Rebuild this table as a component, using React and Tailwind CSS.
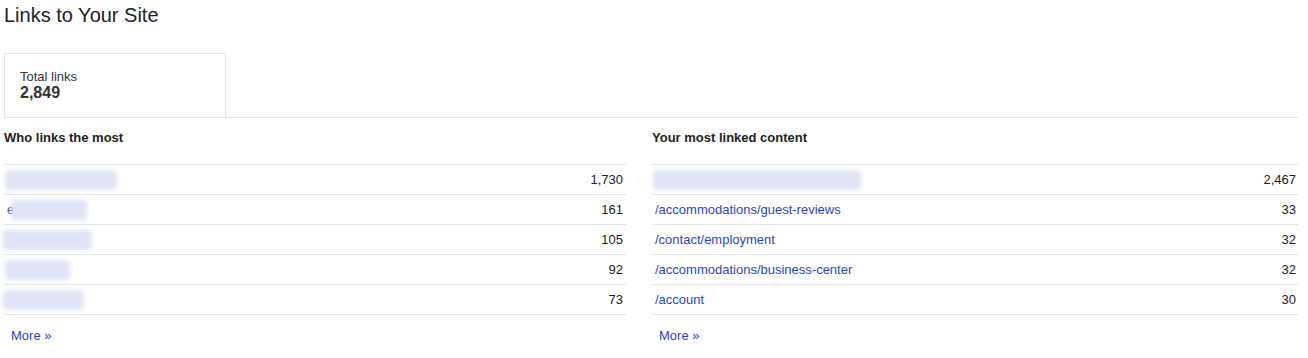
import React from "react";

const whoLinks = [
  { blur: "ml-[1px] w-[112px]", count: "1,730" },
  { blur: "w-[76px]", count: "161", glyph: true },
  { blur: "w-[89px] -ml-[1px]", count: "105" },
  { blur: "ml-[1px] w-[65px]", count: "92" },
  { blur: "w-[81px] -ml-[1px]", count: "73" },
];

const content = [
  { path: null, count: "2,467" },
  { path: "/accommodations/guest-reviews", count: "33" },
  { path: "/contact/employment", count: "32" },
  { path: "/accommodations/business-center", count: "32" },
  { path: "/account", count: "30" },
];

const Blur = ({ className }) => (
  <span className={`block h-[20px] rounded-sm bg-[#e0e4f5] blur-[2px] ${className}`} />
);

const App = () => {
  return (
    <div className="w-[1308px] h-[358px] bg-white pl-[4px] pr-[10px] font-['Liberation_Sans',Arial,sans-serif] text-[#222]">
      <h1 className="text-[20px] leading-[24px] pt-[3px] font-normal">Links to Your Site</h1>

      <div className="mt-[26px] border-b border-[#e5e5e5]">
        <div className="w-[222px] h-[64px] border border-b-0 border-[#e5e5e5] pl-[15px] pt-[15px]">
          <div className="text-[13px] leading-[15px] text-[#333]">Total links</div>
          <div className="text-[16px] leading-[17px] font-bold text-[#333]">2,849</div>
        </div>
      </div>

      <div className="grid grid-cols-[648px_1fr]">
        <div className="pr-[26px]">
          <h2 className="text-[13px] leading-[16px] font-bold pt-[12px] pb-[18px]">Who links the most</h2>
          <div className="border-t border-[#e5e5e5]">
            {whoLinks.map((row, i) => (
              <div key={i} className="flex items-center h-[30px] border-b border-[#e5e5e5] text-[13px] pr-[3px]">
                {row.glyph && <span className="relative z-0 text-[#1a3cc9] text-[12px] ml-[3px] -mr-[3px]">e</span>}
                <Blur className={`relative z-10 ${row.blur}`} />
                <span className="ml-auto">{row.count}</span>
              </div>
            ))}
          </div>
          <a href="#" className="block pl-[7px] pt-[13px] text-[13px] leading-[16px] text-[#2b45cc]">More »</a>
        </div>

        <div>
          <h2 className="text-[13px] leading-[16px] font-bold pt-[12px] pb-[18px]">Your most linked content</h2>
          <div className="border-t border-[#e5e5e5]">
            {content.map((row, i) => (
              <div key={i} className="flex items-center h-[30px] border-b border-[#e5e5e5] text-[13px] pr-[2px]">
                {row.path ? (
                  <a href="#" className="pl-[3px] text-[#2b45cc]">{row.path}</a>
                ) : (
                  <Blur className="w-[208px] ml-[1px]" />
                )}
                <span className="ml-auto">{row.count}</span>
              </div>
            ))}
          </div>
          <a href="#" className="block pl-[7px] pt-[13px] text-[13px] leading-[16px] text-[#2b45cc]">More »</a>
        </div>
      </div>
    </div>
  );
};

export default App;
